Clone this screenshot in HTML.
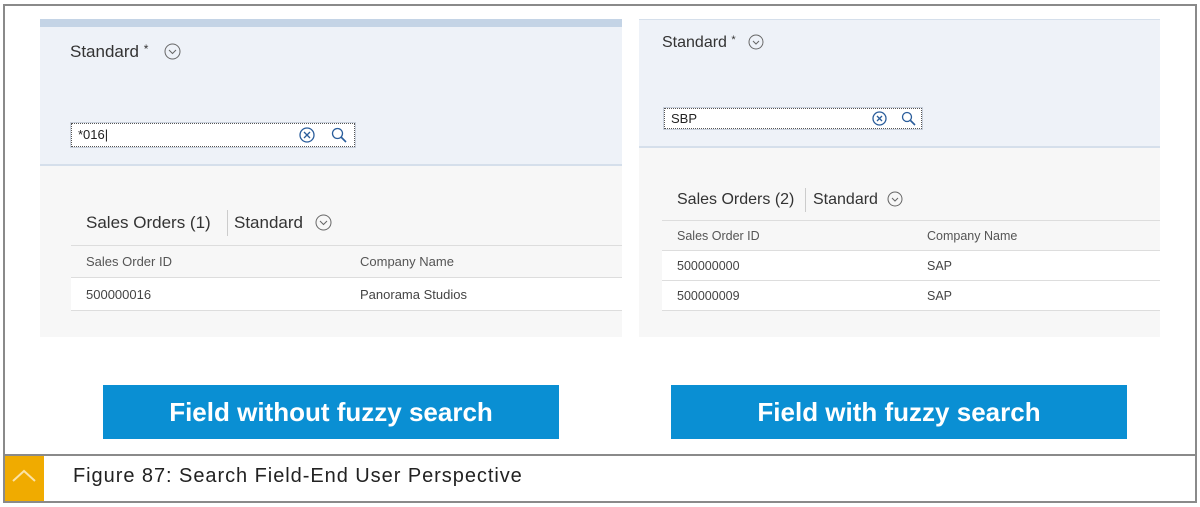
<!DOCTYPE html>
<html><head><meta charset="utf-8"><style>
*{margin:0;padding:0;box-sizing:border-box}
body{width:1200px;height:507px;background:#fff;font-family:"Liberation Sans",Arial,sans-serif;position:relative;overflow:hidden}
.abs{position:absolute}
.frame{left:3px;top:4px;width:1194px;height:499px;border:2px solid #8a8a8a}
.sep{left:3px;top:454px;width:1194px;height:2px;background:#8a8a8a}
.panel{background:#f7f7f7}
.hdr{background:#eef2f8;border-bottom:2px solid #d5dfeb}
.t{color:#333;font-weight:500}
.row{background:#fff;border-bottom:1px solid #ddd;font-size:13px;color:#444}
.btn{background:#0a8fd3;color:#fff;font-weight:bold;font-size:26px;text-align:center;line-height:54px}
.inp{background:#fff;border:1px dotted #555;outline:1px solid #c8d0dc;font-size:13px;color:#222}
</style></head><body>
<div class="abs frame"></div>
<div class="abs sep"></div>

<!-- left panel -->
<div class="abs panel" style="left:40px;top:19px;width:582px;height:318px"></div>
<div class="abs" style="left:40px;top:19px;width:582px;height:8px;background:#c4d4e6"></div>
<div class="abs hdr" style="left:40px;top:27px;width:582px;height:139px"></div>
<div class="abs t" style="left:70px;top:42px;font-size:17px">Standard <span style="font-size:12px;vertical-align:top">*</span></div>
<svg class="abs" style="left:164px;top:43px" width="17" height="17"><circle cx="8.5" cy="8.5" r="7.5" fill="none" stroke="#666"/><path d="M5 7l3.5 3.5L12 7" fill="none" stroke="#666"/></svg>
<div class="abs inp" style="left:71px;top:123px;width:284px;height:24px;padding:3px 0 0 6px">*016|</div>
<svg class="abs" style="left:298px;top:126px" width="18" height="18"><circle cx="9" cy="9" r="7" fill="none" stroke="#2a5d9b" stroke-width="1.3"/><path d="M6 6l6 6M12 6l-6 6" stroke="#2a5d9b" stroke-width="1.3"/></svg>
<svg class="abs" style="left:330px;top:126px" width="18" height="18"><circle cx="7.5" cy="7.5" r="5" fill="none" stroke="#2a5d9b" stroke-width="1.3"/><path d="M11 11l5 5" stroke="#2a5d9b" stroke-width="1.6"/></svg>
<div class="abs t" style="left:86px;top:213px;font-size:17px">Sales Orders (1)</div>
<div class="abs" style="left:227px;top:210px;width:1px;height:26px;background:#ccc"></div>
<div class="abs t" style="left:234px;top:213px;font-size:17px">Standard</div>
<svg class="abs" style="left:315px;top:214px" width="17" height="17"><circle cx="8.5" cy="8.5" r="7.5" fill="none" stroke="#666"/><path d="M5 7l3.5 3.5L12 7" fill="none" stroke="#666"/></svg>
<div class="abs" style="left:71px;top:245px;width:551px;height:33px;border-top:1px solid #ddd;border-bottom:1px solid #ddd;font-size:13px;color:#555"><span class="abs" style="left:15px;top:8px">Sales Order ID</span><span class="abs" style="left:289px;top:8px">Company Name</span></div>
<div class="abs row" style="left:71px;top:278px;width:551px;height:33px"><span class="abs" style="left:15px;top:9px">500000016</span><span class="abs" style="left:289px;top:9px">Panorama Studios</span></div>

<!-- right panel -->
<div class="abs panel" style="left:639px;top:19px;width:521px;height:318px"></div>
<div class="abs hdr" style="left:639px;top:19px;width:521px;height:129px;border-top:1px solid #d5dfeb"></div>
<div class="abs t" style="left:662px;top:34px;font-size:16px">Standard <span style="font-size:11px;vertical-align:top">*</span></div>
<svg class="abs" style="left:748px;top:34px" width="16" height="16"><circle cx="8" cy="8" r="7" fill="none" stroke="#666"/><path d="M5 7l3 3L11 7" fill="none" stroke="#666"/></svg>
<div class="abs inp" style="left:664px;top:108px;width:258px;height:21px;padding:2px 0 0 6px">SBP</div>
<svg class="abs" style="left:871px;top:110px" width="17" height="17"><circle cx="8.5" cy="8.5" r="6.5" fill="none" stroke="#2a5d9b" stroke-width="1.3"/><path d="M6 6l5 5M11 6l-5 5" stroke="#2a5d9b" stroke-width="1.3"/></svg>
<svg class="abs" style="left:900px;top:110px" width="17" height="17"><circle cx="7" cy="7" r="4.5" fill="none" stroke="#2a5d9b" stroke-width="1.3"/><path d="M10.5 10.5l4.5 4.5" stroke="#2a5d9b" stroke-width="1.6"/></svg>
<div class="abs t" style="left:677px;top:191px;font-size:16px">Sales Orders (2)</div>
<div class="abs" style="left:805px;top:188px;width:1px;height:24px;background:#ccc"></div>
<div class="abs t" style="left:813px;top:191px;font-size:16px">Standard</div>
<svg class="abs" style="left:887px;top:191px" width="16" height="16"><circle cx="8" cy="8" r="7" fill="none" stroke="#666"/><path d="M5 7l3 3L11 7" fill="none" stroke="#666"/></svg>
<div class="abs" style="left:662px;top:220px;width:498px;height:31px;border-top:1px solid #ddd;border-bottom:1px solid #ddd;font-size:12.5px;color:#555"><span class="abs" style="left:15px;top:8px">Sales Order ID</span><span class="abs" style="left:265px;top:8px">Company Name</span></div>
<div class="abs row" style="left:662px;top:251px;width:498px;height:30px;font-size:12.5px"><span class="abs" style="left:15px;top:8px">500000000</span><span class="abs" style="left:265px;top:8px">SAP</span></div>
<div class="abs row" style="left:662px;top:281px;width:498px;height:30px;font-size:12.5px"><span class="abs" style="left:15px;top:8px">500000009</span><span class="abs" style="left:265px;top:8px">SAP</span></div>

<!-- buttons -->
<div class="abs btn" style="left:103px;top:385px;width:456px;height:54px">Field without fuzzy search</div>
<div class="abs btn" style="left:671px;top:385px;width:456px;height:54px">Field with fuzzy search</div>

<!-- caption -->
<div class="abs" style="left:5px;top:456px;width:39px;height:45px;background:#f0ab00"></div>
<svg class="abs" style="left:10px;top:466px" width="28" height="20"><path d="M3 15L14 5l11 10" fill="none" stroke="#fbe3a6" stroke-width="2"/></svg>
<div class="abs" style="left:73px;top:465px;font-size:20px;color:#222;letter-spacing:0.95px">Figure 87: Search Field-End User Perspective</div>
</body></html>
